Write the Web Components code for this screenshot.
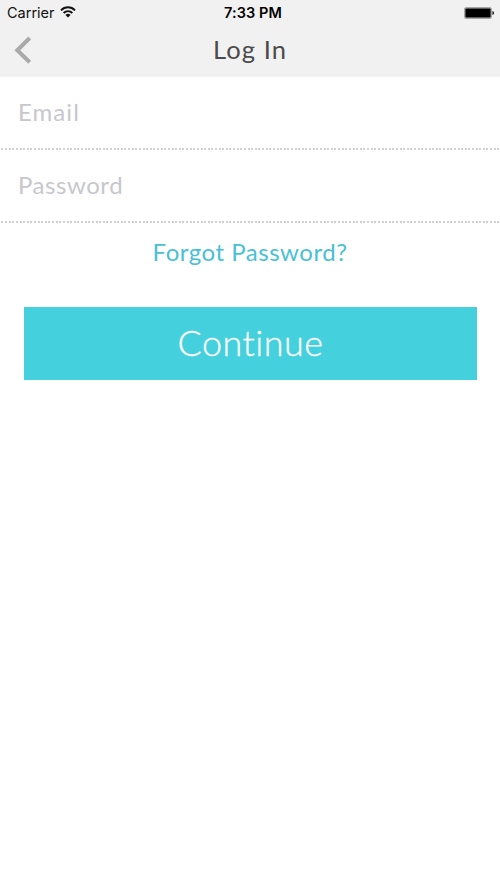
<!DOCTYPE html>
<html lang="en"><head><meta charset="utf-8"><title>Log In</title>
<style>html,body{margin:0;background:#fff}</style></head><body>
<login-screen></login-screen>
<script>
const define = (name, html) => {
  const t = document.createElement('template');
  t.innerHTML = html;
  customElements.define(name, class extends HTMLElement {
    constructor() { super(); this.attachShadow({mode:'open'}).append(t.content.cloneNode(true)); }
  });
};
define('status-bar', `<style>
:host{display:grid;grid-template-columns:1fr auto 1fr;align-items:center;height:24px;padding:1px 6px 0 7px;box-sizing:border-box;font:14.5px/23px Inter,sans-serif;color:#111}
.left{display:flex;align-items:center;gap:5px}
.time{font-weight:600;letter-spacing:.1px;color:#000;padding-left:5px}
.battery{justify-self:end;display:block}
.carrier{letter-spacing:0}
svg{display:block}
.wifi{margin-bottom:2px}
</style>
<div class="left"><span class="carrier">Carrier</span>
<svg class="wifi" width="16" height="12" viewBox="0 0 16 12" fill="none" stroke="#111" stroke-width="1.9"><path d="M1 4.3C5 .3 11 .3 15 4.3M3.6 7C6.2 4.5 9.8 4.5 12.4 7"/><path d="M5.5 8.9Q8 6.7 10.5 8.9L8 11.5Z" fill="#111" stroke="none"/></svg></div>
<span class="time">7:33 PM</span>
<svg class="battery" width="30" height="12" viewBox="0 0 30 12"><rect x=".5" y=".5" width="27" height="11" rx="1.6" fill="#bbb" stroke="#999" stroke-width=".8"/><rect x="1.4" y="1.4" width="25.2" height="9.2" rx=".8"/><path d="M28.5 4Q30 4.5 30 6T28.5 8Z"/></svg>`);
define('nav-bar', `<style>
:host{display:grid;grid-template-columns:60px 1fr 60px;align-items:center;height:53px;font:25.5px/30px Lato,sans-serif;color:#4b4b4b}
svg{display:block;margin:0 0 2px 14px}
h1{font:inherit;margin:0;padding-bottom:4px;text-align:center;letter-spacing:1.1px}
</style><svg width="18" height="28" viewBox="0 0 18 28" fill="none" stroke="#aaa" stroke-width="4"><path d="M15.7 2L3.3 14.2L15.7 26.2"/></svg><h1><slot></slot></h1>`);
define('form-field', `<style>
:host{display:flex;flex-direction:column;height:73px;box-sizing:border-box;font:24px/30px Lato,sans-serif;color:#c7c7cc}
.label{flex:1;display:flex;align-items:center;padding:0 0 1px 18px;letter-spacing:var(--track,0)}
.rule{height:2px;background:repeating-linear-gradient(90deg,#fff 0 1.4px,#d0d0d0 1.4px 3.4px,#fff 3.4px 3.62px)}
</style><div class="label"><span><slot></slot></span></div><div class="rule"></div>`);
define('text-link', `<style>
:host{display:block;text-align:center;font:24px/30px Lato,sans-serif;color:#48c0d5;letter-spacing:.52px}
</style><slot></slot>`);
define('primary-button', `<style>
:host{display:flex;align-items:center;justify-content:center;height:73px;padding-bottom:3px;box-sizing:border-box;background:#45d0de;color:#fff;font:300 36px/44px Lato,sans-serif;letter-spacing:.45px;-webkit-text-stroke:.3px #fff}
</style><span><slot></slot></span>`);
define('login-screen', `<style>
:host{display:block;height:889px;background:#fff;overflow:hidden}
header{background:#f1f1f1;height:77px}
.email{--track:1.05px}
.second{height:73px;--track:.55px}
text-link{margin-top:14px}
primary-button{margin:40px 23px 0 24px}
</style><header><status-bar></status-bar><nav-bar>Log In</nav-bar></header>
<form-field class="email">Email</form-field><form-field class="second">Password</form-field>
<text-link>Forgot Password?</text-link><primary-button>Continue</primary-button>`);
</script></body></html>
